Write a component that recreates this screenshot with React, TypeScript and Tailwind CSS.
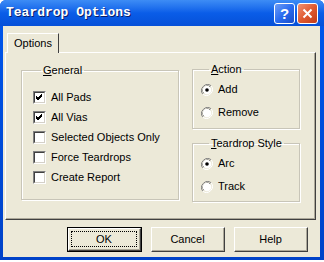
import React from 'react';

const ui = { fontFamily: '"Liberation Sans", Arial, sans-serif' };

const Check: React.FC<{ checked?: boolean; label: string }> = ({ checked, label }) => (
  <div className="flex items-center h-[20px]">
    <div className="w-[13px] h-[13px] border-t border-l border-[#808080] border-b border-r border-b-white border-r-white">
      <div className="w-full h-full border-t border-l border-[#404040] border-b border-r border-b-[#d4d0c8] border-r-[#d4d0c8] bg-white flex items-center justify-center">
        {checked && (
          <svg width="9" height="9" viewBox="0 0 9 9">
            <path d="M1 4 L3 6 L7 2 M1 5 L3 7 L7 3 M1 3 L3 5 L7 1" stroke="#000" strokeWidth="1" fill="none" />
          </svg>
        )}
      </div>
    </div>
    <span className="ml-[5px] text-[11px] text-black">{label}</span>
  </div>
);

const Radio: React.FC<{ checked?: boolean; label: string }> = ({ checked, label }) => (
  <div className="flex items-center h-[23px]">
    <svg width="12" height="12" viewBox="0 0 12 12">
      <path d="M10.2 1.8 A6 6 0 0 0 1.8 10.2" stroke="#808080" fill="none" />
      <path d="M9.2 2.8 A4.6 4.6 0 0 0 2.8 9.2" stroke="#404040" fill="none" />
      <circle cx="6" cy="6" r="4.3" fill="#fff" />
      <path d="M1.8 10.2 A6 6 0 0 0 10.2 1.8" stroke="#fff" fill="none" />
      {checked && <circle cx="6" cy="6" r="1.8" fill="#000" />}
    </svg>
    <span className="ml-[5px] text-[11px] text-black">{label}</span>
  </div>
);

const Group: React.FC<{ accel: string; rest: string; className: string; children: React.ReactNode }> = ({ accel, rest, className, children }) => (
  <fieldset className={`border border-[#c8c5b8] shadow-[inset_1px_1px_0_#fff,1px_1px_0_#fff] ${className}`}>
    <legend className="ml-[8px] px-[2px] text-[11px] leading-[13px] text-black">
      <span className="underline">{accel}</span>
      {rest}
    </legend>
    {children}
  </fieldset>
);

const Btn: React.FC<{ label: string; def?: boolean; className?: string }> = ({ label, def, className }) => (
  <div className={`h-[25px] ${def ? 'border border-black' : ''} ${className ?? ''}`}>
    <div className="w-full h-full border-t border-l border-white border-b border-r border-b-[#404040] border-r-[#404040] bg-[#ece9d8]">
      <div className="w-full h-full border-b border-r border-[#aca899] border-t-0 border-l-0 flex items-center justify-center p-[2px]">
        <div className={`w-full h-full flex items-center justify-center text-[11px] text-black ${def ? 'outline outline-1 outline-dotted outline-black -outline-offset-1' : ''}`}>
          {label}
        </div>
      </div>
    </div>
  </div>
);

export default function App() {
  return (
    <div className="w-[324px] h-[262px] bg-white" style={ui}>
      <div className="w-[324px] h-[260px] flex flex-col bg-gradient-to-b from-[#0058ee] to-[#0042c8] rounded-t-[6px] pl-[3px] pr-[4px] pb-[3px]">
        {/* title bar */}
        <div className="h-[26px] flex items-center justify-between pl-[3px] bg-gradient-to-b from-[#3d8cf5] via-[#0a5de8] to-[#0650d8] -mx-[3px] pr-[6px] -mr-[4px] rounded-t-[6px]">
          <span
            className="ml-[3px] text-[13px] font-bold text-white [text-shadow:1px_1px_0_#0a1e6a]"
            style={{ fontFamily: '"Liberation Mono", "Courier New", monospace' }}
          >
            Teardrop Options
          </span>
          <div className="flex gap-[2px]">
            <div className="w-[21px] h-[21px] rounded-[3px] border border-white bg-gradient-to-br from-[#6d9cf5] via-[#2a6cf0] to-[#1a4cc8] flex items-center justify-center text-white font-bold text-[15px] leading-none">
              ?
            </div>
            <div className="w-[21px] h-[21px] rounded-[3px] border border-white bg-gradient-to-br from-[#f09070] via-[#e05a30] to-[#c03a18] flex items-center justify-center">
              <svg width="11" height="11" viewBox="0 0 11 11">
                <path d="M1.5 1.5 L9.5 9.5 M9.5 1.5 L1.5 9.5" stroke="#fff" strokeWidth="2" />
              </svg>
            </div>
          </div>
        </div>

        {/* body */}
        <div className="flex-1 bg-[#ece9d8] flex flex-col pt-[7px]">
          <div className="ml-[4px] w-[52px] h-[20px] border-t border-l border-white border-r border-r-[#404040] flex items-center justify-center text-[11px] text-black relative z-10 bg-[#ece9d8] -mb-[1px]">
            Options
          </div>
          <div className="ml-[2px] w-[311px] h-[168px] border-t border-l border-white border-b border-r border-b-[#404040] border-r-[#404040]">
            <div className="w-full h-full border-b border-r border-[#aca899] border-t-0 border-l-0 flex pt-[11px] pl-[15px]">
              <Group accel="G" rest="eneral" className="w-[158px] h-[136px] pl-[11px] pt-[10px]">
                <Check checked label="All Pads" />
                <Check checked label="All Vias" />
                <Check label="Selected Objects Only" />
                <Check label="Force Teardrops" />
                <Check label="Create Report" />
              </Group>
              <div className="ml-[13px] flex flex-col">
                <Group accel="A" rest="ction" className="w-[108px] h-[66px] pl-[8px] -mt-[1px] pt-[2px]">
                  <Radio checked label="Add" />
                  <Radio label="Remove" />
                </Group>
                <Group accel="T" rest="eardrop Style" className="w-[108px] h-[65px] pl-[8px] mt-[8px] pt-[2px]">
                  <Radio checked label="Arc" />
                  <Radio label="Track" />
                </Group>
              </div>
            </div>
          </div>
          <div className="flex mt-[7px] pl-[64px] gap-[9px]">
            <Btn label="OK" def className="w-[75px]" />
            <Btn label="Cancel" className="w-[74px]" />
            <Btn label="Help" className="w-[74px]" />
          </div>
        </div>
      </div>
    </div>
  );
}
